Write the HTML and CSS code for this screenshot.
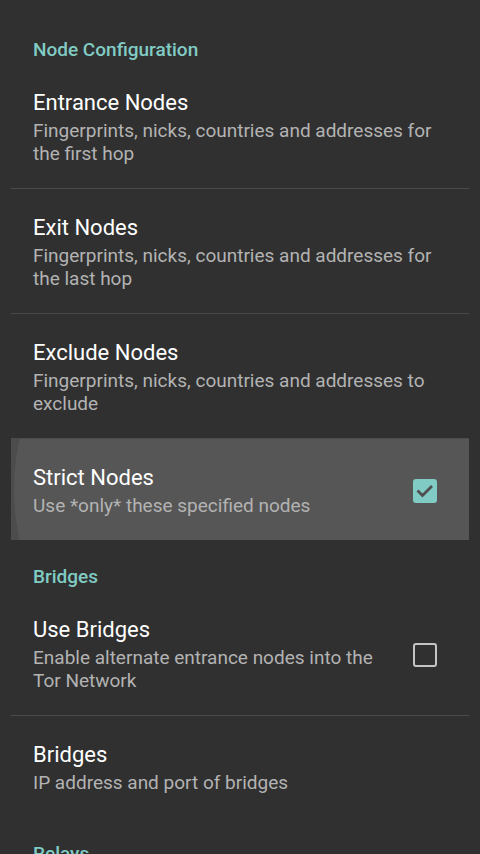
FILE: index.html
```html
<!DOCTYPE html>
<html>
<head>
    <meta charset="UTF-8">
    <meta name="viewport" content="width=device-width, initial-scale=1.0">
    <title>Settings</title>
    <link rel="stylesheet" href="styles.css">
</head>
<body>
    <div class="list">
        <div class="category">Node Configuration</div>

        <div class="pref">
            <div class="pref-text">
                <div class="pref-title">Entrance Nodes</div>
                <div class="pref-summary">Fingerprints, nicks, countries and addresses for the first hop</div>
            </div>
        </div>
        <div class="pref">
            <div class="pref-text">
                <div class="pref-title">Exit Nodes</div>
                <div class="pref-summary">Fingerprints, nicks, countries and addresses for the last hop</div>
            </div>
        </div>
        <div class="pref">
            <div class="pref-text">
                <div class="pref-title">Exclude Nodes</div>
                <div class="pref-summary">Fingerprints, nicks, countries and addresses to exclude</div>
            </div>
        </div>
        <div class="pref pressed">
            <div class="ripple"></div>
            <div class="pref-text">
                <div class="pref-title">Strict Nodes</div>
                <div class="pref-summary">Use *only* these specified nodes</div>
            </div>
            <div class="checkbox checked">
                <svg width="24" height="24" viewBox="0 0 24 24">
                    <path d="M4.5 11.5 L9.5 16.5 L19 7" fill="none" stroke="#4f4f4f" stroke-width="2.8"/>
                </svg>
            </div>
        </div>

        <div class="category">Bridges</div>

        <div class="pref">
            <div class="pref-text">
                <div class="pref-title">Use Bridges</div>
                <div class="pref-summary">Enable alternate entrance nodes into the Tor Network</div>
            </div>
            <div class="checkbox"></div>
        </div>
        <div class="pref">
            <div class="pref-text">
                <div class="pref-title">Bridges</div>
                <div class="pref-summary">IP address and port of bridges</div>
            </div>
        </div>

        <div class="category">Relays</div>
    </div>
</body>
</html>
```

FILE: styles.css
```css
/* settings list */
html, body {
    height: 100%;
}

body {
    margin: 0;
    padding: 0;
    background-color: #303030;
    font-family: Roboto, "Noto Sans", sans-serif;
    overflow: hidden;
}

.list {
    padding: 13px 11px 0 11px;
}

.category {
    padding: 27px 22px 4px 22px;
    font-size: 19px;
    font-weight: 500;
    line-height: 20px;
    color: #80cbc4;
}

.pref {
    position: relative;
    display: flex;
    align-items: center;
    padding: 26px 32px 23px 22px;
    border-top: 1px solid #4a4a4a;
}

.category + .pref {
    border-top: none;
}

.pref.pressed {
    border-top-color: #4c4c4c;
    background-color: #4c4c4c;
    overflow: hidden;
}

.ripple {
    position: absolute;
    left: 3px;
    right: -300px;
    top: -250px;
    bottom: -250px;
    border-radius: 50%;
    background-color: #565656;
}

.pref-text {
    position: relative;
    flex: 1;
}

.pref-title {
    font-size: 22px;
    line-height: 26px;
    color: #ffffff;
}

.pref-summary {
    margin-top: 3px;
    font-size: 19px;
    line-height: 23px;
    color: #b3b3b3;
}

.checkbox {
    position: relative;
    flex: none;
    width: 20px;
    height: 20px;
    margin-left: 24px;
    border: 2.5px solid #c4c4c4;
    border-radius: 3px;
}

.checkbox.checked {
    border-color: #80cbc4;
    background-color: #80cbc4;
}

.checkbox svg {
    position: absolute;
    left: -2px;
    top: -2px;
}
```
